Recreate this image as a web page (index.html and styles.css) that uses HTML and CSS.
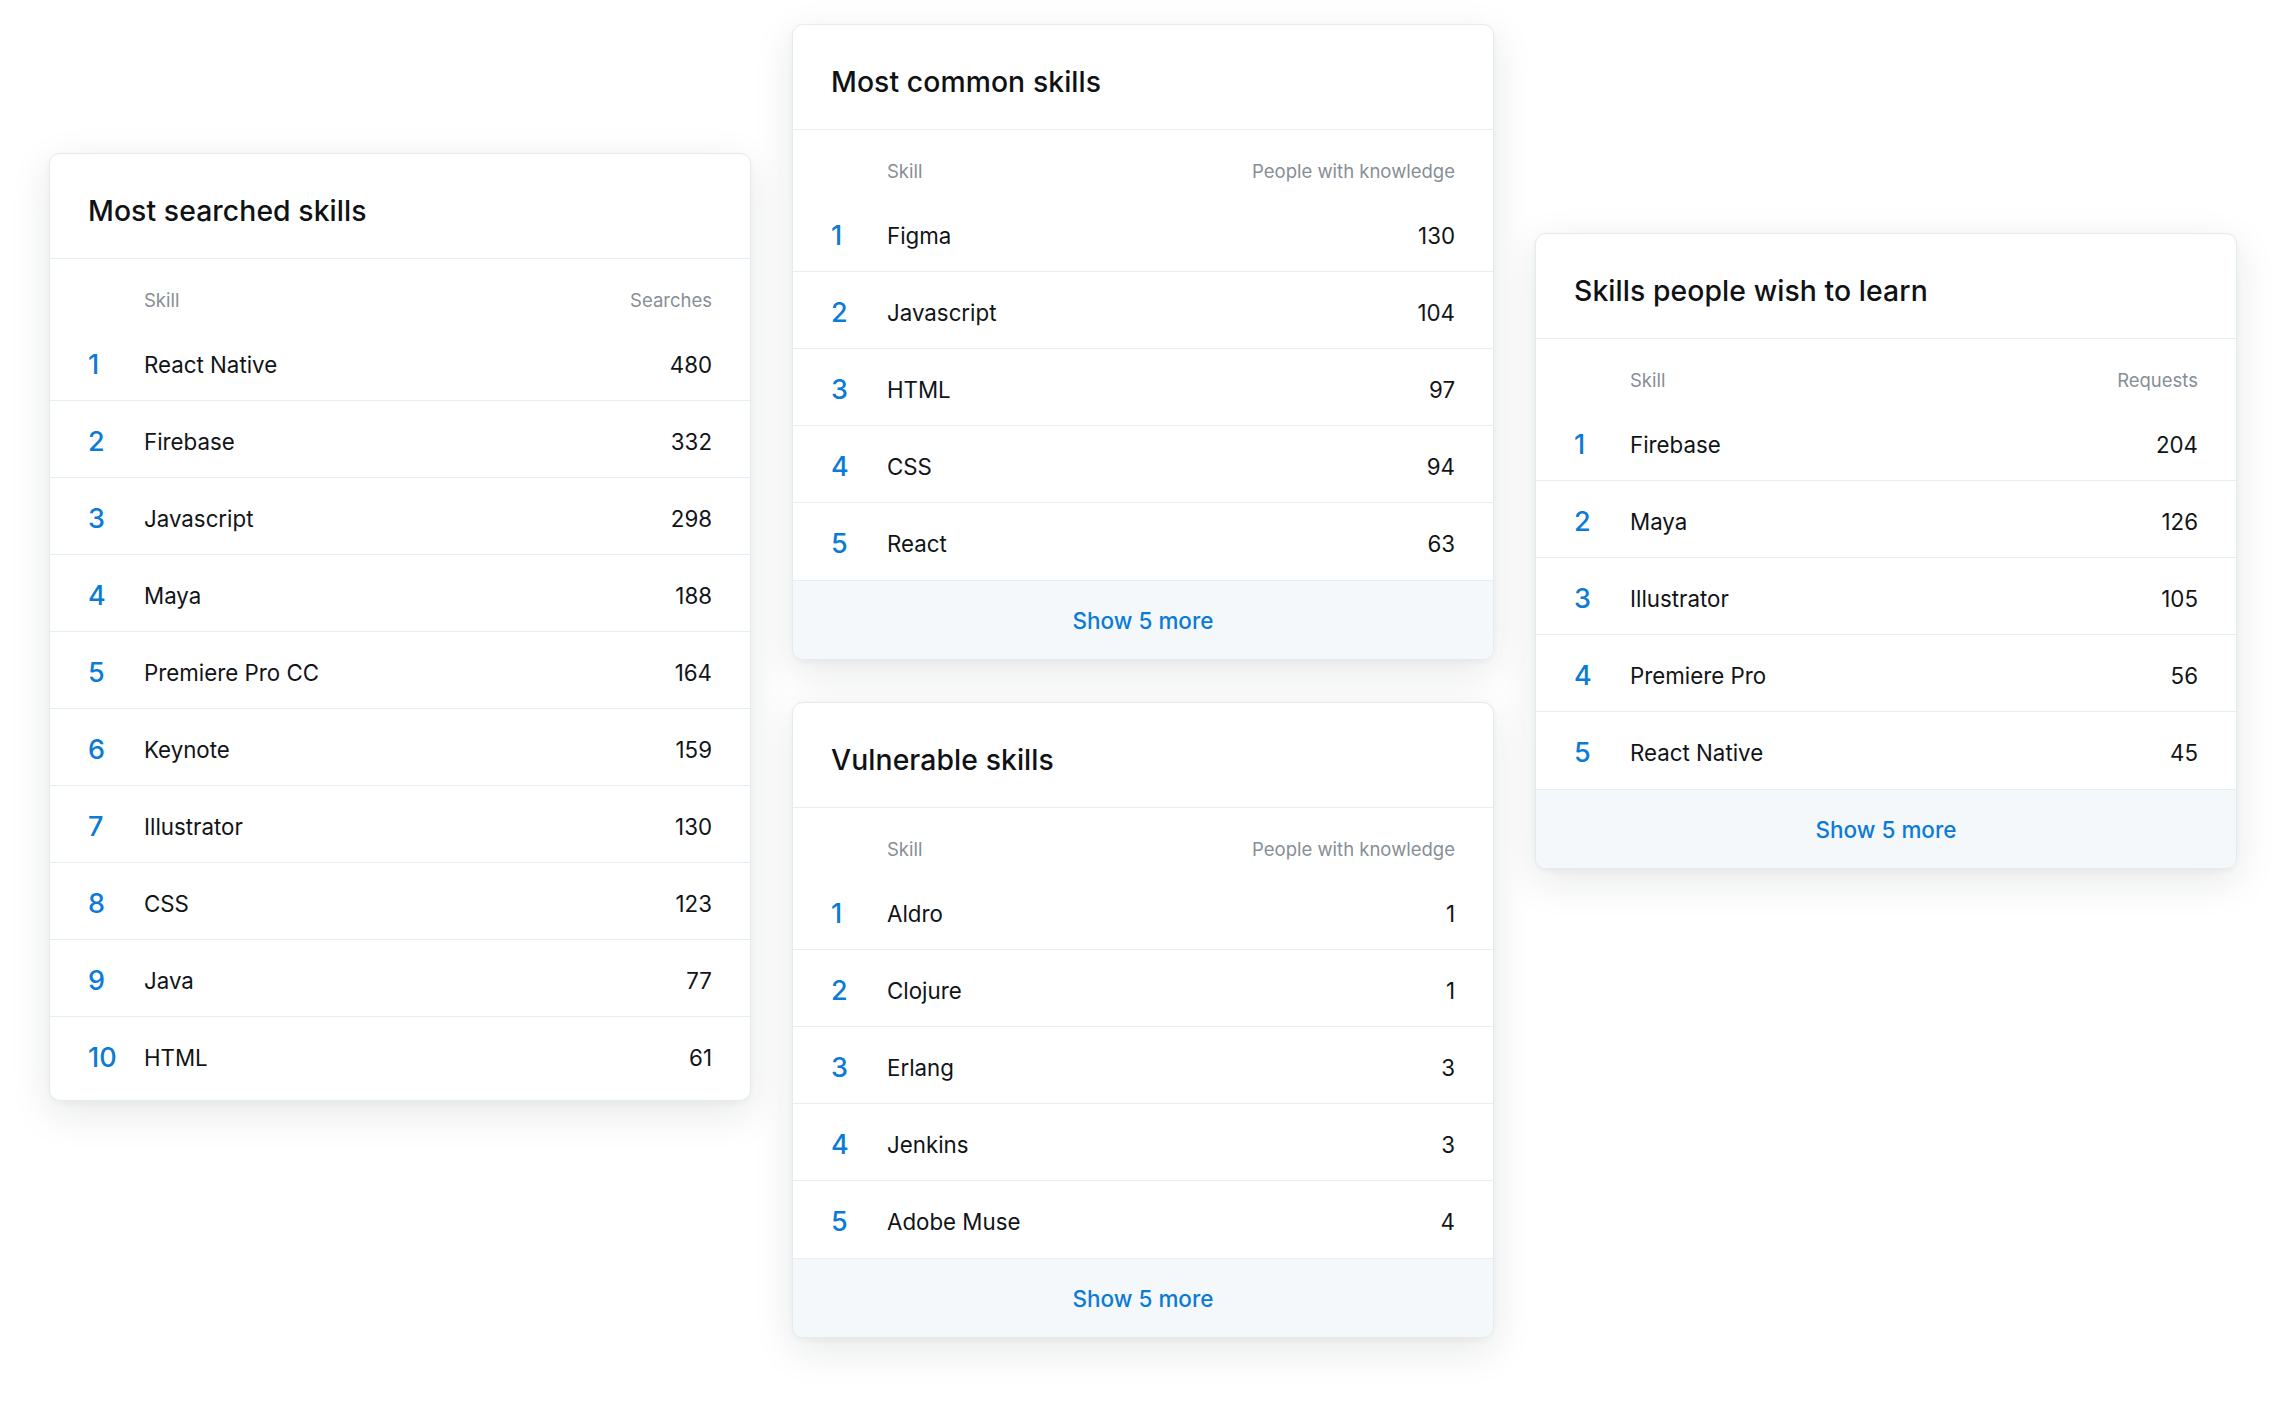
FILE: index.html
```html
<!DOCTYPE html>
<html lang="en">
<head>
<meta charset="utf-8">
<title>Skills</title>
<link rel="stylesheet" href="styles.css">
</head>
<body>
<main class="board">
  <div class="col col-left">
    <section class="card">
      <h2 class="card-title">Most searched skills</h2>
      <div class="col-head"><span></span><span>Skill</span><span class="right">Searches</span></div>
      <ol class="rows rows-end">
        <li class="row"><span class="rank">1</span><span class="name">React Native</span><span class="val">480</span></li>
        <li class="row"><span class="rank">2</span><span class="name">Firebase</span><span class="val">332</span></li>
        <li class="row"><span class="rank">3</span><span class="name">Javascript</span><span class="val">298</span></li>
        <li class="row"><span class="rank">4</span><span class="name">Maya</span><span class="val">188</span></li>
        <li class="row"><span class="rank">5</span><span class="name">Premiere Pro CC</span><span class="val">164</span></li>
        <li class="row"><span class="rank">6</span><span class="name">Keynote</span><span class="val">159</span></li>
        <li class="row"><span class="rank">7</span><span class="name">Illustrator</span><span class="val">130</span></li>
        <li class="row"><span class="rank">8</span><span class="name">CSS</span><span class="val">123</span></li>
        <li class="row"><span class="rank">9</span><span class="name">Java</span><span class="val">77</span></li>
        <li class="row"><span class="rank">10</span><span class="name">HTML</span><span class="val">61</span></li>
      </ol>
    </section>
  </div>

  <div class="col col-mid">
    <section class="card">
      <h2 class="card-title">Most common skills</h2>
      <div class="col-head"><span></span><span>Skill</span><span class="right">People with knowledge</span></div>
      <ol class="rows">
        <li class="row"><span class="rank">1</span><span class="name">Figma</span><span class="val">130</span></li>
        <li class="row"><span class="rank">2</span><span class="name">Javascript</span><span class="val">104</span></li>
        <li class="row"><span class="rank">3</span><span class="name">HTML</span><span class="val">97</span></li>
        <li class="row"><span class="rank">4</span><span class="name">CSS</span><span class="val">94</span></li>
        <li class="row"><span class="rank">5</span><span class="name">React</span><span class="val">63</span></li>
      </ol>
      <button class="more">Show 5 more</button>
    </section>

    <section class="card">
      <h2 class="card-title">Vulnerable skills</h2>
      <div class="col-head"><span></span><span>Skill</span><span class="right">People with knowledge</span></div>
      <ol class="rows">
        <li class="row"><span class="rank">1</span><span class="name">Aldro</span><span class="val">1</span></li>
        <li class="row"><span class="rank">2</span><span class="name">Clojure</span><span class="val">1</span></li>
        <li class="row"><span class="rank">3</span><span class="name">Erlang</span><span class="val">3</span></li>
        <li class="row"><span class="rank">4</span><span class="name">Jenkins</span><span class="val">3</span></li>
        <li class="row"><span class="rank">5</span><span class="name">Adobe Muse</span><span class="val">4</span></li>
      </ol>
      <button class="more">Show 5 more</button>
    </section>
  </div>

  <div class="col col-right">
    <section class="card">
      <h2 class="card-title">Skills people wish to learn</h2>
      <div class="col-head"><span></span><span>Skill</span><span class="right">Requests</span></div>
      <ol class="rows">
        <li class="row"><span class="rank">1</span><span class="name">Firebase</span><span class="val">204</span></li>
        <li class="row"><span class="rank">2</span><span class="name">Maya</span><span class="val">126</span></li>
        <li class="row"><span class="rank">3</span><span class="name">Illustrator</span><span class="val">105</span></li>
        <li class="row"><span class="rank">4</span><span class="name">Premiere Pro</span><span class="val">56</span></li>
        <li class="row"><span class="rank">5</span><span class="name">React Native</span><span class="val">45</span></li>
      </ol>
      <button class="more">Show 5 more</button>
    </section>
  </div>
</main>
</body>
</html>
```

FILE: styles.css
```css
* { box-sizing: border-box; }

html, body {
  margin: 0;
  padding: 0;
  background: #ffffff;
}

body {
  font-family: Inter, "Noto Sans", "Liberation Sans", sans-serif;
  color: #111417;
}

.board {
  display: flex;
  align-items: flex-start;
  gap: 41px;
  padding-left: 49px;
  padding-bottom: 60px;
}

.col {
  display: flex;
  flex-direction: column;
  gap: 42px;
  width: 702px;
}

.col-left { margin-top: 153px; }
.col-mid { margin-top: 24px; }
.col-right { margin-top: 233px; }

.card {
  width: 702px;
  background: #ffffff;
  border: 1px solid #e2ebf2;
  border-radius: 11px;
  overflow: hidden;
  box-shadow: 0 12px 40px rgba(20, 28, 36, 0.10), 0 2px 6px rgba(20, 28, 36, 0.04);
}

.card-title {
  margin: 0;
  padding: 40px 38px 30px;
  font-size: 28.3px;
  line-height: 34px;
  font-weight: 500;
  letter-spacing: 0.1px;
  border-bottom: 1px solid #e6eef4;
  color: #0f1215;
}

.col-head {
  display: grid;
  grid-template-columns: 56px 1fr auto;
  padding: 29px 38px 12px;
  font-size: 18.5px;
  line-height: 24px;
  color: #878e96;
}

.col-head .right { text-align: right; }

.rows {
  list-style: none;
  margin: 0;
  padding: 0;
}

.rows-end { padding-bottom: 6px; }

.row {
  display: grid;
  grid-template-columns: 56px 1fr auto;
  align-items: center;
  height: 77px;
  padding: 4px 38px 0;
  border-bottom: 1px solid #e6eef4;
}

.rows .row:last-child { border-bottom: none; }

.rank {
  font-size: 27px;
  font-weight: 500;
  color: #0c7bd6;
}

.name, .val {
  font-size: 22.3px;
  color: #111417;
}

.val { text-align: right; }

.more {
  display: block;
  width: 100%;
  height: 79px;
  border: none;
  border-top: 1px solid #e6eef4;
  background: #f4f8fb;
  font-family: inherit;
  font-size: 22.5px;
  font-weight: 500;
  color: #0c7bd6;
  padding: 0;
  cursor: pointer;
}
```
